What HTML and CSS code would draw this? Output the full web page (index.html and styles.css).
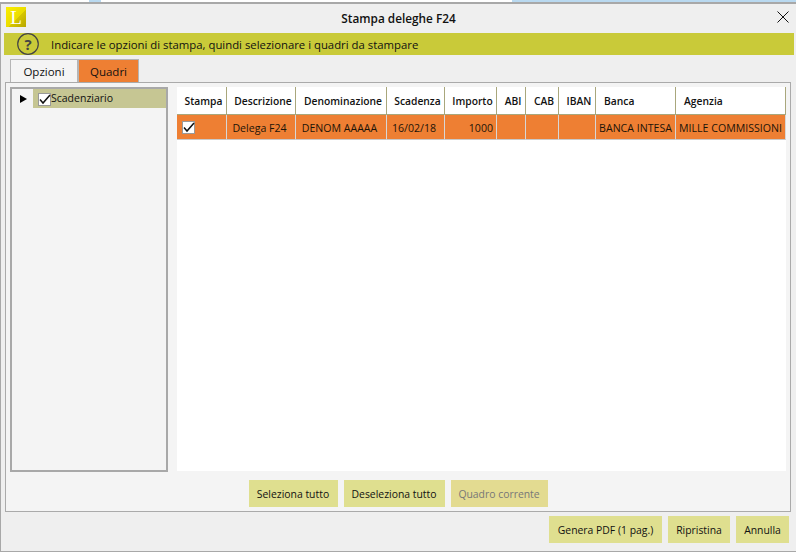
FILE: index.html
```html
<!DOCTYPE html>
<html lang="it">
<head>
<meta charset="utf-8">
<title>Stampa deleghe F24</title>
<link rel="stylesheet" href="styles.css">
</head>
<body>
<div class="strip"><span class="blue b1"></span><span class="blue b2"></span></div>
<div class="window">
  <header class="titlebar">
    <svg class="logo" viewBox="0 0 20 20" width="20" height="20"><defs><linearGradient id="lg" x1="0" y1="0" x2="1" y2="1"><stop offset="0" stop-color="#fbee00"/><stop offset=".55" stop-color="#eadc00"/><stop offset=".56" stop-color="#d6c600"/><stop offset="1" stop-color="#b8a600"/></linearGradient></defs><rect width="20" height="20" fill="url(#lg)"/><text x="10" y="17" text-anchor="middle" class="logo-l">L</text></svg>
    <h1 class="title">Stampa deleghe F24</h1>
    <svg class="close" viewBox="0 0 12 12" width="12" height="12"><path d="M.5.5l11 11M11.500.5l-11 11" stroke="#111" stroke-width="1" fill="none"/></svg>
  </header>
  <div class="hint">
    <svg class="help" viewBox="0 0 22 22" width="22" height="22"><circle cx="11" cy="11" r="10.300" fill="none" stroke="#444" stroke-width="1.200"/><text x="11" y="16.500" text-anchor="middle" class="help-q">?</text></svg>
    <span>Indicare le opzioni di stampa, quindi selezionare i quadri da stampare</span>
  </div>
  <div class="tabs">
    <div class="tab">Opzioni</div>
    <div class="tab tab-active">Quadri</div>
  </div>
  <section class="panel">
    <div class="panel-main">
      <aside class="tree">
        <div class="tree-row">
          <span class="arrow"></span>
          <div class="tree-item">
            <svg class="check" viewBox="0 0 13 13" width="13" height="13"><rect x=".5" y=".5" width="12" height="12" fill="#fff" stroke="#999"/><path d="M2 6.500l3 3.500 7-8" fill="none" stroke="#111" stroke-width="1.500"/></svg>
            <span>Scadenziario</span>
          </div>
        </div>
      </aside>
      <div class="grid-wrap">
        <div class="grid">
          <div class="h">Stampa</div><div class="h">Descrizione</div><div class="h">Denominazione</div><div class="h">Scadenza</div><div class="h">Importo</div><div class="h">ABI</div><div class="h">CAB</div><div class="h">IBAN</div><div class="h left">Banca</div><div class="h left">Agenzia</div>
          <div class="d d-check"><svg class="check" viewBox="0 0 13 13" width="13" height="13"><rect x=".5" y=".5" width="12" height="12" fill="#fff" stroke="#999"/><path d="M2 6.500l3 3.500 7-8" fill="none" stroke="#111" stroke-width="1.500"/></svg></div><div class="d shift">Delega F24</div><div class="d shift">DENOM AAAAA</div><div class="d shift">16/02/18</div><div class="d right">1000</div><div class="d"></div><div class="d"></div><div class="d"></div><div class="d">BANCA INTESA</div><div class="d">MILLE COMMISSIONI</div>
        </div>
      </div>
    </div>
    <div class="panel-actions">
      <button class="btn b-sel">Seleziona tutto</button>
      <button class="btn b-desel">Deseleziona tutto</button>
      <button class="btn btn-off b-cur">Quadro corrente</button>
    </div>
  </section>
  <footer class="footer">
    <button class="btn b-pdf">Genera PDF (1 pag.)</button>
    <button class="btn b-rip">Ripristina</button>
    <button class="btn b-ann">Annulla</button>
  </footer>
</div>
</body>
</html>
```
FILE: styles.css
```css
* { box-sizing: border-box; }
html, body { margin: 0; padding: 0; width: 796px; height: 552px; overflow: hidden; background: #fff; }
body { font-family: "Open Sans", "Noto Sans", sans-serif; font-size: 10.400px; color: #111; }
.strip { height: 2px; background: #fff; display: flex; }
.blue { display: block; height: 2px; background: #b9d9f0; }
.b1 { width: 12px; margin-left: 89px; }
.b2 { width: 284px; margin-left: 411px; }
.window { height: 550px; border-top: 2px solid #a8a8a8; border-left: 1px solid #a8a8a8; border-bottom: 1px solid #a8a8a8; background: #efefef; display: flex; flex-direction: column; }
.titlebar { height: 29px; display: flex; align-items: flex-start; position: relative; padding: 3px 7px 0 5px; flex: none; }
.logo-l { font-family: "Liberation Serif", serif; font-size: 19px; fill: #fff; }
.title { position: absolute; left: 0; right: 0; top: 0; margin: 0; text-align: center; font-size: 11.800px; font-weight: 600; line-height: 28px; }
.close { margin-left: auto; margin-top: 4px; }
.hint { height: 22px; margin: 0 2px 0 3px; background: #c9ca39; display: flex; align-items: center; gap: 12px; padding-left: 13px; flex: none; font-size: 11.350px; }
.help-q { font-family: "Open Sans", sans-serif; font-size: 15px; font-weight: 700; fill: #444; }
.tabs { display: flex; height: 23px; margin: 4px 0 0 9px; flex: none; }
.tab { width: 68px; height: 23px; border: 1px solid #b5b5b5; border-bottom: 0; background: #f4f4f4; display: flex; align-items: center; justify-content: center; font-size: 11.500px; }
.tab-active { width: 61px; background: #ee7f33; }
.panel { width: 786px; height: 430px; margin-left: 4px; border: 1px solid #aaa; background: #f4f4f4; display: flex; flex-direction: column; flex: none; }
.panel-main { display: flex; height: 385px; margin: 4px 0 0 4px; }
.tree { width: 158px; height: 385px; border: 2px solid #a8a8a8; flex: none; }
.tree-row { display: flex; align-items: stretch; height: 19px; }
.arrow { width: 0; height: 0; margin: 6px 0 0 8px; border-left: 7px solid #000; border-top: 4px solid transparent; border-bottom: 4px solid transparent; }
.tree-item { flex: 1; margin-left: 6px; background: #c6c693; display: flex; align-items: center; padding-left: 5px; font-size: 10.500px; }
.tree-item .check { margin-top: 2px; }
.tree-item span { margin-top: -1px; }
.grid-wrap { width: 609px; height: 384px; margin-left: 9px; background: #fff; flex: none; }
.grid { display: grid; grid-template-columns: 50px 69px 91px 58px 52px 29px 33px 37px 80px 110px; grid-template-rows: 28px 25px; }
.h { background: #fff; border-right: 1px solid #a9a77c; border-bottom: 1px solid #a9a77c; font-weight: 600; font-size: 10.300px; padding: 1px 0 0 4px; display: flex; align-items: center; justify-content: center; white-space: nowrap; }
.h.left { justify-content: flex-start; padding-left: 8px; }
.d { background: #ee7f33; border-right: 1px solid #d7d7d7; border-bottom: 1px solid #c9c9c9; padding-top: 2px; font-size: 10.600px; display: flex; align-items: center; justify-content: center; white-space: nowrap; overflow: hidden; color: #1c1408; }
.d.shift { padding-right: 3px; }
.d.right { justify-content: flex-end; padding-right: 3px; }
.d-check { justify-content: flex-start; padding: 0 0 0 5px; }
.panel-actions { display: flex; justify-content: center; gap: 6px; margin-top: 8px; }
.btn { height: 27px; padding: 0; border: 0; background: #dfdf8f; font: inherit; font-size: 10.400px; color: #111; }
.btn-off { background: #e3db91; color: #777; }
.b-sel { width: 89px; }
.b-desel { width: 101px; }
.b-cur { width: 97px; }
.b-pdf { width: 113px; }
.b-rip { width: 62px; }
.b-ann { width: 53px; }
.footer { display: flex; justify-content: flex-end; gap: 6px; margin-top: 4px; padding-right: 7px; }
```
